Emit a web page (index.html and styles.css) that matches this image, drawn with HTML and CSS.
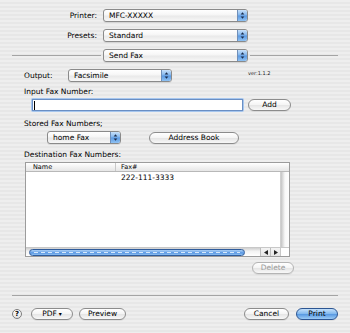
FILE: index.html
```html
<!DOCTYPE html>
<html>
<head>
<meta charset="utf-8">
<link rel="stylesheet" href="styles.css">
</head>
<body>
<div class="dialog">
  <div class="top">
    <div class="frow">
      <span class="flabel">Printer:</span>
      <div class="popup pw">
        <span class="ptext">MFC-XXXXX</span>
        <span class="arr"><svg width="10" height="11" viewBox="0 0 10 11"><polygon points="3,4.5 7,4.5 5,2" /><polygon points="3,6.5 7,6.5 5,9" /></svg></span>
      </div>
    </div>
    <div class="frow">
      <span class="flabel">Presets:</span>
      <div class="popup pw">
        <span class="ptext">Standard</span>
        <span class="arr"><svg width="10" height="11" viewBox="0 0 10 11"><polygon points="3,4.5 7,4.5 5,2" /><polygon points="3,6.5 7,6.5 5,9" /></svg></span>
      </div>
    </div>
  </div>
  <div class="sep-row">
    <span class="line left"></span>
    <div class="popup pw">
      <span class="ptext">Send Fax</span>
      <span class="arr"><svg width="10" height="11" viewBox="0 0 10 11"><polygon points="3,4.5 7,4.5 5,2" /><polygon points="3,6.5 7,6.5 5,9" /></svg></span>
    </div>
    <span class="line right"></span>
  </div>

  <div class="pane">
    <div class="out-row">
      <span class="out-label">Output:</span>
      <div class="popup facs">
        <span class="ptext">Facsimile</span>
        <span class="arr"><svg width="10" height="11" viewBox="0 0 10 11"><polygon points="3,4.5 7,4.5 5,2" /><polygon points="3,6.5 7,6.5 5,9" /></svg></span>
      </div>
      <span class="ver">ver:1.1.2</span>
    </div>

    <div class="lbl l-input">Input Fax Number:</div>
    <div class="input-row">
      <div class="ring"><div class="field"><span class="caret"></span></div></div>
      <div class="btn add">Add</div>
    </div>

    <div class="lbl l-stored">Stored Fax Numbers;</div>
    <div class="stored-row">
      <div class="popup home">
        <span class="ptext">home Fax</span>
        <span class="arr"><svg width="10" height="11" viewBox="0 0 10 11"><polygon points="3,4.5 7,4.5 5,2" /><polygon points="3,6.5 7,6.5 5,9" /></svg></span>
      </div>
      <div class="btn abook">Address Book</div>
    </div>

    <div class="lbl l-dest">Destination Fax Numbers:</div>
    <div class="table">
      <div class="thead">
        <span class="th name">Name</span>
        <span class="th fax">Fax#</span>
      </div>
      <div class="tbody">
        <div class="rows">
          <div class="tr"><span class="td name"></span><span class="td fax">222-111-3333</span></div>
        </div>
        <div class="vscroll"></div>
      </div>
      <div class="hbar">
        <div class="track"><div class="thumb"><span class="dash"></span></div></div>
        <div class="sarrow"><svg width="4" height="5" viewBox="0 0 4 5"><polygon points="4,0 4,5 0,2.5" /></svg></div>
        <div class="sarrow"><svg width="4" height="5" viewBox="0 0 4 5"><polygon points="0,0 0,5 4,2.5" /></svg></div>
        <div class="corner"></div>
      </div>
    </div>

    <div class="del-row">
      <div class="btn del">Delete</div>
    </div>
  </div>

  <div class="sep"></div>

  <div class="bottom">
    <div class="help">?</div>
    <div class="btn pdf">PDF <span class="tri">▾</span></div>
    <div class="btn preview">Preview</div>
    <div class="btn cancel">Cancel</div>
    <div class="btn print">Print</div>
  </div>
</div>
</body>
</html>
```

FILE: styles.css
```css
* { box-sizing: border-box; }
html, body { margin: 0; padding: 0; }
body {
  width: 350px;
  height: 333px;
  overflow: hidden;
  font-family: "DejaVu Sans", "Lucida Grande", sans-serif;
  font-size: 7.5px;
  color: #000;
  background: repeating-linear-gradient(180deg, #eeeeee 0px, #eeeeee 2px, #e7e7e7 2px, #e7e7e7 4px);
}
.dialog {
  width: 350px;
  height: 333px;
  display: flex;
  flex-direction: column;
}

/* top fields */
.top {
  padding-top: 9px;
  display: flex;
  flex-direction: column;
  gap: 7px;
}
.frow {
  display: flex;
  align-items: center;
  height: 13px;
}
.flabel {
  width: 97px;
  text-align: right;
  margin-right: 6px;
}

/* popup button */
.popup {
  height: 13px;
  display: flex;
  align-items: stretch;
  border: 1px solid #8a8a8a;
  border-radius: 3px;
  background: linear-gradient(180deg, #ffffff 0%, #f6f6f6 45%, #e9e9e9 55%, #f7f7f7 100%);
  box-shadow: 0 1px 0 rgba(0,0,0,0.08);
  overflow: hidden;
}
.pw { width: 145px; }
.ptext {
  flex: 1;
  padding-left: 5px;
  line-height: 11px;
  white-space: nowrap;
}
.arr {
  width: 10px;
  display: flex;
  align-items: center;
  justify-content: center;
  border-left: 1px solid #6f8fb9;
  background: linear-gradient(180deg, #c9e1fa 0%, #8cbcef 40%, #5d9be3 55%, #8fc2f3 100%);
}
.arr svg polygon { fill: #1b2b4a; }

/* separator with popup */
.sep-row {
  margin-top: 7px;
  height: 13px;
  display: flex;
  align-items: center;
  padding: 0 12px;
}
.line {
  height: 1px;
  background: #a4a4a4;
}
.line.left { width: 89px; margin-right: 2px; }
.line.right { flex: 1; margin-left: 2px; }

/* pane */
.pane {
  padding-left: 24px;
  display: flex;
  flex-direction: column;
}
.out-row {
  margin-top: 7px;
  display: flex;
  align-items: flex-start;
  height: 13px;
}
.out-label {
  width: 44px;
  line-height: 13px;
}
.facs { width: 104px; }
.ver {
  margin-left: 76px;
  margin-top: 1px;
  font-size: 5px;
  line-height: 6px;
  color: #222;
}
.lbl {
  line-height: 10px;
  height: 10px;
}
.l-input { margin-top: 5px; }
.input-row {
  margin-top: 1px;
  display: flex;
  align-items: center;
  height: 14px;
}
.ring {
  margin-left: 7px;
  width: 213px;
  height: 14px;
  padding: 1px;
  border-radius: 2px;
  background: #a6c6ee;
}
.field {
  width: 100%;
  height: 100%;
  background: #fff;
  border: 1px solid #6a8fc4;
  padding: 1px 1px;
  display: flex;
  align-items: center;
}
.caret {
  width: 1px;
  height: 9px;
  background: #000;
}

/* push button */
.btn {
  height: 12px;
  border: 1px solid #8c8c8c;
  border-radius: 6px;
  background: linear-gradient(180deg, #ffffff 0%, #f5f5f5 45%, #e6e6e6 55%, #f8f8f8 100%);
  display: flex;
  align-items: center;
  justify-content: center;
  line-height: 10px;
  white-space: nowrap;
  box-shadow: 0 1px 0 rgba(0,0,0,0.06);
}
.add { width: 43px; margin-left: 4px; }

.l-stored { margin-top: 7px; }
.stored-row {
  margin-top: 2px;
  display: flex;
  align-items: center;
  height: 13px;
}
.home { width: 74px; margin-left: 23px; }
.abook { width: 90px; margin-left: 28px; }

.l-dest { margin-top: 6px; }

/* table */
.table {
  margin-top: 2px;
  margin-left: 1px;
  width: 265px;
  height: 95px;
  border: 1px solid #9c9c9c;
  background: #fff;
  display: flex;
  flex-direction: column;
}
.thead {
  height: 9px;
  display: flex;
  border-bottom: 1px solid #b8b8b8;
  background: linear-gradient(180deg, #ffffff 0%, #f2f2f2 50%, #e6e6e6 100%);
  font-size: 6.5px;
  line-height: 8px;
}
.th.name {
  width: 90px;
  padding-left: 7px;
  border-right: 1px solid #c8c8c8;
}
.th.fax { flex: 1; padding-left: 5px; }
.tbody {
  flex: 1;
  display: flex;
}
.rows { flex: 1; }
.tr {
  display: flex;
  height: 12px;
  line-height: 12px;
}
.td.name { width: 90px; }
.td.fax { padding-left: 5px; }
.vscroll {
  width: 9px;
  background: linear-gradient(90deg, #c4c4c4 0px, #dedede 2px, #f8f8f8 4px, #ffffff 9px);
  border-left: 1px solid #d0d0d0;
}
.hbar {
  height: 9px;
  display: flex;
  border-top: 1px solid #c8c8c8;
}
.track {
  flex: 1;
  padding: 1px 15px 0 3px;
  background: linear-gradient(180deg, #cfcfcf 0%, #f2f2f2 40%, #ffffff 100%);
  display: flex;
}
.thumb {
  flex: 1;
  height: 7px;
  border: 1px solid #2f5c9c;
  border-radius: 4px;
  background: linear-gradient(180deg, #a8cdf5 0%, #74aaea 45%, #5493e0 55%, #8ec0f2 100%);
  display: flex;
  align-items: center;
  padding: 0 4px;
}
.dash {
  flex: 1;
  height: 1px;
  background: repeating-linear-gradient(90deg, #d6e8fb 0px, #d6e8fb 4px, transparent 4px, transparent 7px);
}
.sarrow {
  width: 10px;
  border-left: 1px solid #bdbdbd;
  background: linear-gradient(180deg, #f4f4f4, #e4e4e4);
  display: flex;
  align-items: center;
  justify-content: center;
}
.sarrow svg polygon { fill: #222; }
.corner {
  width: 9px;
  border-left: 1px solid #c8c8c8;
  background: #fff;
}

.del-row {
  margin-top: 5px;
  display: flex;
}
.del {
  width: 42px;
  margin-left: 228px;
  color: #9a9a9a;
  border-color: #b4b4b4;
}

.sep {
  margin: 21px 12px 0;
  height: 1px;
  background: #a4a4a4;
}

.bottom {
  margin-top: 12px;
  padding: 0 12px;
  display: flex;
  align-items: center;
  height: 12px;
}
.help {
  width: 10px;
  height: 10px;
  border-radius: 50%;
  border: 1px solid #7d7d7d;
  background: linear-gradient(180deg, #ffffff, #e2e2e2);
  font-size: 7px;
  font-weight: bold;
  line-height: 8px;
  text-align: center;
}
.pdf { width: 42px; margin-left: 9px; }
.tri { font-size: 6px; margin-left: 2px; }
.preview { width: 47px; margin-left: 6px; }
.cancel { width: 45px; margin-left: auto; }
.print {
  width: 42px;
  margin-left: 7px;
  border-color: #2c5592;
  background: linear-gradient(180deg, #c4e0fb 0%, #86bbef 45%, #5b9be3 55%, #9ccbf5 100%);
}
```
